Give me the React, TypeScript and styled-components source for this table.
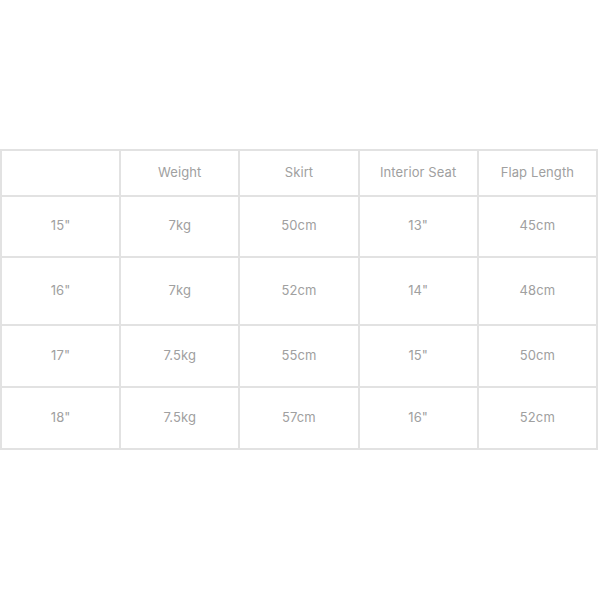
import styled, { createGlobalStyle } from 'styled-components';

const GlobalStyle = createGlobalStyle`
  body {
    margin: 0;
    background: #fff;
    font-family: Inter, 'Open Sans', sans-serif;
  }
`;

const Page = styled.div`
  padding-top: 149px;
  width: 600px;
  height: 600px;
  box-sizing: border-box;
`;

const Table = styled.table`
  width: 598px;
  border-collapse: collapse;
  table-layout: fixed;
  border: 2px solid #e2e2e2;
`;

const Row = styled.tr<{ h: number }>`
  height: ${({ h }) => h}px;
`;

const Cell = styled.td`
  border: 2px solid #e2e2e2;
  text-align: center;
  vertical-align: middle;
  padding: 0 0 3px;
  font-size: 13px;
  font-weight: 400;
  color: #a0a0a0;
  letter-spacing: 0.1px;
`;

const HeadCell = styled(Cell).attrs({ as: 'th' })`
  font-weight: 400;
`;

const columns = ['', 'Weight', 'Skirt', 'Interior Seat', 'Flap Length'];

const rows = [
  { h: 61, cells: ['15"', '7kg', '50cm', '13"', '45cm'] },
  { h: 68, cells: ['16"', '7kg', '52cm', '14"', '48cm'] },
  { h: 62, cells: ['17"', '7.5kg', '55cm', '15"', '50cm'] },
  { h: 62, cells: ['18"', '7.5kg', '57cm', '16"', '52cm'] },
];

export default function App() {
  return (
    <>
      <GlobalStyle />
      <Page>
        <Table>
          <thead>
            <Row h={46}>
              {columns.map((c, i) => (
                <HeadCell key={i}>{c}</HeadCell>
              ))}
            </Row>
          </thead>
          <tbody>
            {rows.map((r, i) => (
              <Row key={i} h={r.h}>
                {r.cells.map((c, j) => (
                  <Cell key={j}>{c}</Cell>
                ))}
              </Row>
            ))}
          </tbody>
        </Table>
      </Page>
    </>
  );
}
